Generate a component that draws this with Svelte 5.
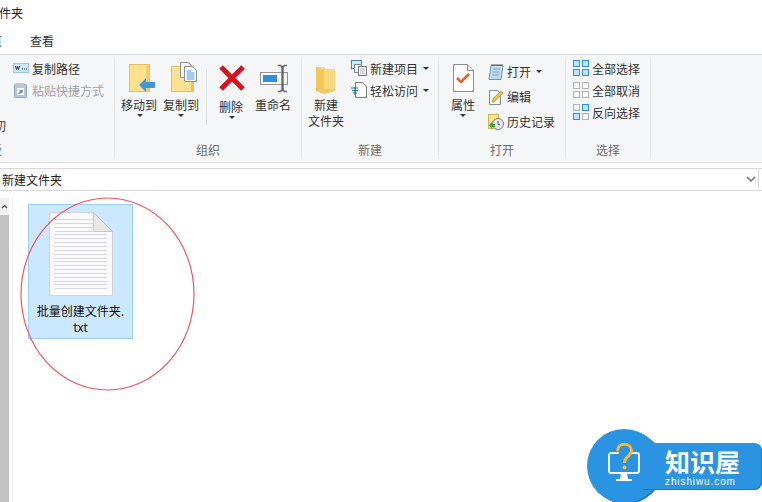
<script>
   const selectRows = [
      { label: '全部选择', on: [1, 1, 1, 1] },
      { label: '全部取消', on: [0, 0, 0, 0] },
      { label: '反向选择', on: [0, 1, 1, 0] }
   ];
   const cells = [[0, 0], [9, 0], [0, 9], [9, 9]];
   // the text lines of the file icon
   const fileLines = Array.from({ length: 19 }, (_, i) => 7 + i * 3.85);
</script>

<div class="window">
   <div class="title"><span>新建文件夹</span></div>
   <div class="tabs"><span class="tab-cut">主页</span><span>查看</span></div>

   <div class="ribbon">
      <section class="group clip">
         <div class="body">
            <div class="cut-col"><span>剪切</span></div>
            <div class="rows">
               <div class="row">
                  <svg width="16" height="16" viewBox="0 0 16 16"><rect x="0.5" y="3.5" width="15" height="9" fill="#cfe6fa" stroke="#9cc4e4"/><path d="M2.5 6l1 3.5 1-3 1 3 1-3.5" fill="none" stroke="#23384f"/><path d="M9 9h1M11 9h1M13 9h1" stroke="#23384f"/></svg>
                  <span>复制路径</span>
               </div>
               <div class="row dim">
                  <svg width="16" height="16" viewBox="0 0 16 16"><rect x="1.5" y="2.5" width="12" height="13" rx="1" fill="#b9c6d4" stroke="#94a3b3"/><rect x="4" y="1" width="7" height="3" fill="#c3ccd5"/><rect x="4" y="6" width="7" height="7" fill="#fff"/><path d="M5.5 12l3-3M6.5 8.5h2.5v2.5" fill="none" stroke="#7b8793" stroke-width="1.2"/></svg>
                  <span>粘贴快捷方式</span>
               </div>
            </div>
         </div>
         <div class="group-label cut-label"><span>剪贴板</span></div>
      </section>

      <section class="group org">
         <div class="body">
            <div class="large shift-left">
               <svg width="36" height="35" viewBox="0 0 36 35">
                  <rect x="6.5" y="2.5" width="20" height="27" fill="#ffe08f" stroke="#e8c15e"/>
                  <path d="M24.5 3v26" stroke="#efc45c" stroke-width="2"/>
                  <path d="M16 23l7-7v4h9v6h-9v4z" fill="#3f97e0"/>
               </svg>
               <span>移动到</span>
               <i class="caret"></i>
            </div>
            <div class="large">
               <svg width="36" height="35" viewBox="0 0 36 35">
                  <rect x="8.5" y="4.5" width="22" height="25" fill="#ffe08f" stroke="#e8c15e"/>
                  <path d="M29 5v24" stroke="#efc45c" stroke-width="2"/>
                  <path d="M17.5 0.5h8l3 3v12h-11z" fill="#f4f4f4" stroke="#8d8d8d"/>
                  <path d="M21.5 4.5h8l4 4v11h-12z" fill="#fff" stroke="#8d8d8d"/>
                  <path d="M23.5 9h5M23.5 11h8M23.5 13h8M23.5 15h8M23.5 17h8" stroke="#3f97e0"/>
               </svg>
               <span>复制到</span>
               <i class="caret"></i>
            </div>
            <div class="divider"></div>
            <div class="large low">
               <svg width="36" height="35" viewBox="0 0 36 35">
                  <path d="M7 5l22 22M29 5L7 27" stroke="#d9101d" stroke-width="5"/>
               </svg>
               <span>删除</span>
               <i class="caret"></i>
            </div>
            <div class="large rename">
               <svg width="36" height="35" viewBox="0 0 36 35">
                  <rect x="5.5" y="10.5" width="27" height="12" fill="#fff" stroke="#8e9499"/>
                  <rect x="8" y="13" width="14" height="7" fill="#2f8fdf"/>
                  <path d="M27.5 4v25" stroke="#63676b" stroke-width="2.4"/>
                  <path d="M23 3.5h2.5l2 2 2-2H32M23 29.5h2.5l2-2 2 2H32" fill="none" stroke="#63676b" stroke-width="1.6"/>
               </svg>
               <span>重命名</span>
            </div>
         </div>
         <div class="group-label"><span>组织</span></div>
      </section>

      <section class="group new">
         <div class="body">
            <div class="large">
               <svg width="36" height="35" viewBox="0 0 36 35">
                  <path d="M8 5h8l2 2h9v22H14z" fill="#fbd77f"/>
                  <path d="M8 5l8 3v24l-8-3z" fill="#f4c557"/>
                  <path d="M16 27h11v2l-11 3z" fill="#efc868"/>
               </svg>
               <span>新建</span>
               <span>文件夹</span>
            </div>
            <div class="rows">
               <div class="row">
                  <svg width="16" height="16" viewBox="0 0 16 16"><rect x="0.5" y="0.5" width="10" height="8" fill="#d6e9f8" stroke="#3f86c2"/><rect x="3.5" y="4.5" width="7" height="8" fill="#eef4f9" stroke="#7d8b97"/><rect x="7.5" y="6.5" width="8" height="9" fill="#fff" stroke="#7d7d7d"/><path d="M9 9h5M9 11h5M9 13h5" stroke="#b0b0b0"/></svg>
                  <span>新建项目</span><i class="caret side"></i>
               </div>
               <div class="row">
                  <svg width="16" height="16" viewBox="0 0 16 16"><path d="M4.5 0.5h7l4 4v11h-11z" fill="#fff" stroke="#7d7d7d"/><path d="M0 6h7M1 8.5h6M2 11h4" stroke="#2a6fb0"/><path d="M4 5v8" stroke="#2a6fb0"/></svg>
                  <span>轻松访问</span><i class="caret side"></i>
               </div>
            </div>
         </div>
         <div class="group-label"><span>新建</span></div>
      </section>

      <section class="group open">
         <div class="body">
            <div class="large">
               <svg width="36" height="35" viewBox="0 0 36 35">
                  <path d="M8.5 2.5h14l6 6v21h-20z" fill="#fff" stroke="#8b8b8b"/>
                  <path d="M22.5 2.5v6h6" fill="#eee" stroke="#8b8b8b"/>
                  <path d="M12 16l4 4 8-8" fill="none" stroke="#ea5f26" stroke-width="2.6"/>
               </svg>
               <span>属性</span>
               <i class="caret"></i>
            </div>
            <div class="rows tall">
               <div class="row">
                  <svg width="16" height="16" viewBox="0 0 16 16"><path d="M3 1.5h12l-2 14H1z" fill="#bfdcee" stroke="#6d95ad"/><path d="M5 5h7M4.5 8h7M4 11h7" stroke="#7fa9c2"/><path d="M3 1h12" stroke="#555"/></svg>
                  <span>打开</span><i class="caret side"></i>
               </div>
               <div class="row">
                  <svg width="16" height="16" viewBox="0 0 16 16"><path d="M1.5 1.5h8l3 3v11h-11z" fill="#fff" stroke="#8b8b8b"/><path d="M4 13l1-3 8-8 2 2-8 8z" fill="#f5bf3d" stroke="#c98a1c" stroke-width="0.7"/></svg>
                  <span>编辑</span>
               </div>
               <div class="row">
                  <svg width="16" height="16" viewBox="0 0 16 16"><rect x="0.5" y="0.5" width="10" height="14" fill="#ffe08f" stroke="#d9b24c"/><circle cx="10" cy="10" r="5.5" fill="#e8e8e8" stroke="#7e7e7e"/><path d="M10 7v3l2 1" fill="none" stroke="#555"/><path d="M1 11l3-3v2h3v3H4v2z" fill="#3fa535"/></svg>
                  <span>历史记录</span>
               </div>
            </div>
         </div>
         <div class="group-label"><span>打开</span></div>
      </section>

      <section class="group pick">
         <div class="body">
            <div class="rows">
               {#each selectRows as item}
                  <div class="row">
                     <svg width="16" height="16" viewBox="0 0 16 16">
                        {#each cells as c, i}
                           <rect
                              x={c[0] + 0.5} y={c[1] + 0.5} width="6" height="6"
                              fill={item.on[i] ? '#bfe3ff' : '#fff'}
                              stroke={item.on[i] ? '#2f8fdf' : '#b4b4b4'}
                           />
                        {/each}
                     </svg>
                     <span>{item.label}</span>
                  </div>
               {/each}
            </div>
         </div>
         <div class="group-label"><span>选择</span></div>
      </section>
   </div>

   <div class="address">
      <span class="path">新建文件夹</span>
      <svg class="chev" width="10" height="6" viewBox="0 0 10 6"><path d="M1 1l4 4 4-4" fill="none" stroke="#777" stroke-width="1.6"/></svg>
   </div>

   <div class="content">
      <div class="scrollbar">
         <div class="arrow">
            <svg width="7" height="5" viewBox="0 0 7 5"><path d="M1 4l2.5-2.5L6 4" fill="none" stroke="#555" stroke-width="1.4"/></svg>
         </div>
         <div class="thumb"></div>
      </div>
      <div class="files">
         <div class="file">
            <svg width="64" height="85" viewBox="0 0 64 85">
               <path d="M0.5 0.5h44l19 19v64h-63z" fill="#fafafa" stroke="#d2d2d2"/>
               {#each fileLines as y}
                  <path d={`M6 ${Math.round(y) + 0.5}H${y < 20 ? 44 : 58}`} stroke="#d5d7da"/>
               {/each}
               <path d="M44.5 0.5v19h19z" fill="#e6e6e6" stroke="#c8c8c8"/>
            </svg>
            <span class="name">批量创建文件夹.<br />txt</span>
         </div>
      </div>
   </div>

   <svg class="ring" width="176" height="195" viewBox="0 0 176 195">
      <ellipse cx="87.5" cy="97" rx="86.5" ry="96" fill="none" stroke="#f4555c" stroke-width="1.2"/>
   </svg>

   <div class="badge">
      <div class="badge-round">
         <svg width="36" height="44" viewBox="0 0 36 44">
            <path d="M13 11H5a2 2 0 0 0-2 2v16a2 2 0 0 0 2 2h26a2 2 0 0 0 2-2V13a2 2 0 0 0-2-2h-8" fill="none" stroke="#fff" stroke-width="1.8"/>
            <path d="M15 31h6l1 6h4v2H10v-2h4z" fill="#fff"/>
            <path d="M11.5 9c0-9 14-9 14 0 0 5-7 5-7 12" fill="none" stroke="#fbb829" stroke-width="3"/>
            <circle cx="18.5" cy="25.5" r="2" fill="#fbb829"/>
         </svg>
      </div>
      <div class="badge-bar">
         <span class="badge-name">知识屋</span>
         <span class="badge-url">zhishiwu.com</span>
      </div>
   </div>
</div>

<style>
   :global(body) {
      margin: 0;
      background: #fff;
   }

   .window {
      position: relative;
      width: 762px;
      height: 502px;
      overflow: hidden;
      display: flex;
      flex-direction: column;
      font-family: "Noto Sans CJK SC", "Liberation Sans", sans-serif;
      font-size: 12px;
      color: #333;
   }

   .title {
      height: 25px;
      line-height: 25px;
      color: #222;
   }

   .title span {
      margin-left: -37px;
   }

   .tabs {
      height: 29px;
      display: flex;
      align-items: center;
      padding-top: 1px;
      box-sizing: border-box;
   }

   .tab-cut {
      margin-left: -22px;
      margin-right: 28px;
   }

   .ribbon {
      height: 109px;
      box-sizing: border-box;
      display: flex;
      background: #f5f6f7;
      border-top: 1px solid #dadbdc;
      border-bottom: 1px solid #dadbdc;
      padding: 2px 0 3px;
   }

   .group {
      box-sizing: border-box;
      border-right: 1px solid #e1e3e6;
      display: flex;
      flex-direction: column;
   }

   .clip { width: 115px; }
   .org { width: 187px; padding-left: 6px; }
   .new { width: 137px; padding-left: 6px; }
   .open { width: 127px; padding-left: 6px; }
   .pick { width: 85px; padding-left: 7px; }

   .body {
      height: 84px;
      display: flex;
      flex: none;
   }

   .group-label {
      height: 18px;
      line-height: 18px;
      text-align: center;
      color: #6d6d6d;
   }

   .clip .group-label { text-align: left; }
   .org .group-label { margin-left: -6px; }
   .new .group-label { margin-left: -6px; }
   .open .group-label { margin-left: -6px; }
   .pick .group-label { margin-left: -7px; }

   .cut-label span {
      margin-left: -34px;
   }

   .cut-col {
      width: 13px;
      padding-top: 61px;
      line-height: 16px;
   }

   .cut-col span {
      display: block;
      width: 24px;
      margin-left: -18px;
   }

   .large {
      width: 40px;
      padding-top: 5px;
      display: flex;
      flex-direction: column;
      align-items: center;
      line-height: 16px;
      white-space: nowrap;
   }

   .new .large, .open .large {
      width: 36px;
      margin-right: 7px;
   }

   .large svg {
      flex: none;
   }

   .shift-left span {
      margin-right: 4px;
   }

   .shift-left .caret {
      margin-right: 2px;
   }

   .low span {
      margin-top: 2px;
      margin-right: 2px;
   }

   .rename {
      margin-left: 1px;
   }

   .divider {
      width: 1px;
      height: 55px;
      margin: 13px 5px 0;
      background: #e1e3e6;
   }

   .caret {
      display: block;
      width: 0;
      height: 0;
      margin-top: 1px;
      border-left: 3px solid transparent;
      border-right: 3px solid transparent;
      border-top: 3px solid #333;
   }

   .caret.side {
      margin: 0 0 0 2px;
   }

   .rows {
      display: flex;
      flex-direction: column;
   }

   .rows.tall {
      padding-top: 2px;
   }

   .row {
      height: 22px;
      display: flex;
      align-items: center;
      gap: 3px;
      white-space: nowrap;
   }

   .rows.tall .row {
      height: 25px;
   }

   .row svg {
      flex: none;
   }

   .dim {
      color: #a2a2a2;
   }

   .address {
      margin-top: 5px;
      height: 23px;
      box-sizing: border-box;
      border-top: 1px solid #d9d9d9;
      border-bottom: 1px solid #d9d9d9;
      display: flex;
      align-items: center;
      justify-content: space-between;
      padding: 0 6px 1px 2px;
      color: #222;
   }

   .address::after {
      content: "";
      width: 1px;
      height: 100%;
      background: #d9d9d9;
      margin-right: -3px;
   }

   .chev {
      margin-left: auto;
      margin-right: 2px;
   }

   .content {
      flex: 1;
      display: flex;
      padding-top: 7px;
      min-height: 0;
   }

   .scrollbar {
      width: 9px;
      display: flex;
      flex-direction: column;
      flex: none;
      background: #f0f0f0;
      margin-right: 3px;
   }

   .arrow {
      height: 17px;
      display: flex;
      justify-content: center;
      align-items: center;
      background: #f1f1f1;
   }

   .thumb {
      flex: 1;
      background: #c3c3c3;
   }

   .files {
      flex: 1;
      border-left: 1px solid #f2f2f2;
      padding: 6px 0 0 15px;
   }

   .file {
      width: 105px;
      height: 135px;
      box-sizing: border-box;
      background: #cce8ff;
      border: 1px solid #99d1ff;
      display: flex;
      flex-direction: column;
      align-items: center;
      padding-top: 7px;
   }

   .name {
      margin-top: 6px;
      line-height: 16px;
      text-align: center;
      color: #111;
      white-space: nowrap;
   }

   /* hand drawn annotation over the file */
   .ring {
      position: absolute;
      left: 20px;
      top: 197px;
      pointer-events: none;
   }

   .badge {
      position: absolute;
      left: 587px;
      top: 429px;
      width: 175px;
      height: 74px;
      color: #fff;
   }

   .badge-round {
      position: absolute;
      left: 0;
      top: 0;
      width: 74px;
      height: 74px;
      box-sizing: border-box;
      padding-top: 13px;
      border-radius: 50%;
      background: #2a93e2;
      box-shadow: 2px 1px 0 #2379bd;
      display: flex;
      justify-content: center;
   }

   .badge-bar {
      position: absolute;
      left: 56px;
      top: 14px;
      width: 119px;
      height: 47px;
      box-sizing: border-box;
      padding: 4px 0 0 22px;
      background: #2a93e2;
      border-radius: 0 8px 8px 0;
      box-shadow: inset -1px -1px 0 #2379bd;
      display: flex;
      flex-direction: column;
   }

   .badge-name {
      font-size: 25px;
      font-weight: 700;
      line-height: 29px;
   }

   .badge-url {
      font-family: "Liberation Sans", sans-serif;
      font-size: 10px;
      line-height: 11px;
      letter-spacing: 0.9px;
      white-space: nowrap;
   }
</style>
